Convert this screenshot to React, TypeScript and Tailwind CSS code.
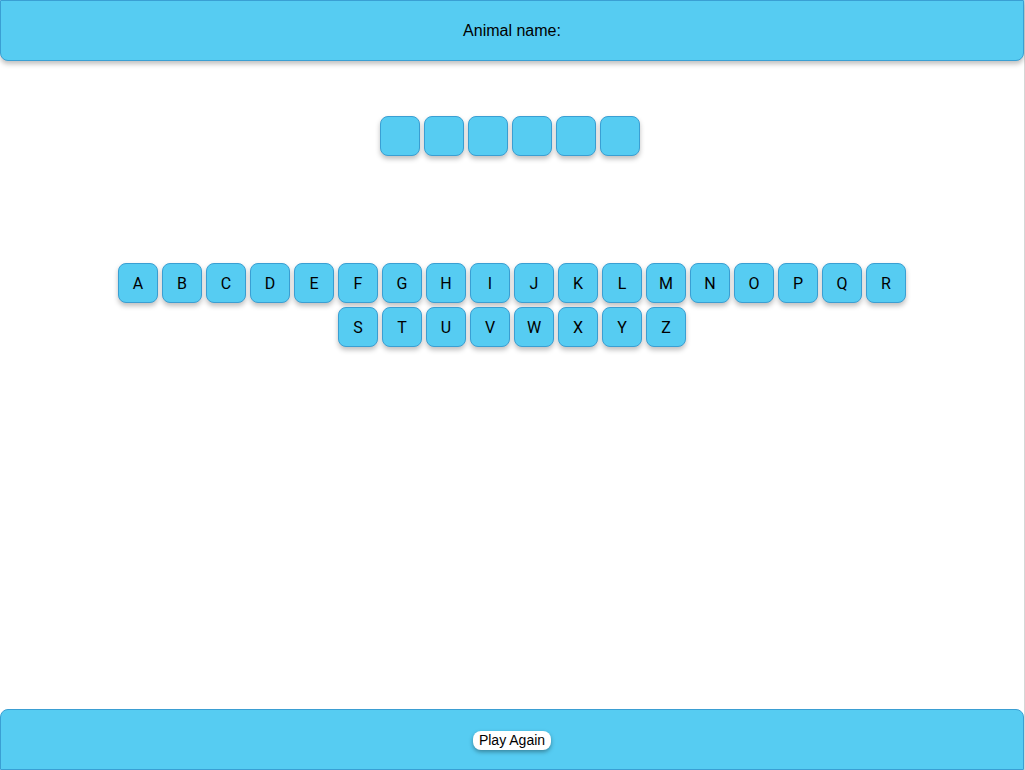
import React from "react";

const letters = "ABCDEFGHIJKLMNOPQRSTUVWXYZ".split("");

export default function App() {
  return (
    <div
      className="flex h-[770px] w-[1025px] flex-col border-r border-[#d6d6d6] bg-white"
      style={{ fontFamily: "Roboto, 'Liberation Sans', sans-serif" }}
    >
      <header className="flex h-[61px] shrink-0 items-center justify-center rounded-b-lg border border-[#3a9fd3] bg-[#56ccf2] shadow-[0_3px_5px_rgba(0,0,0,0.25)]">
        <span className="text-[16px] text-black" style={{ fontFamily: "'Liberation Sans', Arial, sans-serif" }}>
          Animal name:
        </span>
      </header>

      <div className="mt-[55px] flex justify-center gap-[4px] pr-[4px]">
        {Array.from({ length: 6 }).map((_, i) => (
          <div
            key={i}
            className="h-[40px] w-[40px] rounded-lg border border-[#3a9fd3] bg-[#56ccf2] shadow-[0_3px_5px_rgba(0,0,0,0.25)]"
          />
        ))}
      </div>

      <div className="mx-auto mt-[107px] flex w-[792px] flex-wrap justify-center gap-[4px]">
        {letters.map((l) => (
          <button
            key={l}
            className="flex h-[40px] w-[40px] items-center justify-center rounded-lg border border-[#3a9fd3] bg-[#56ccf2] pt-[2px] text-[16px] text-black shadow-[0_3px_5px_rgba(0,0,0,0.25)]"
          >
            {l}
          </button>
        ))}
      </div>

      <footer className="mt-auto flex h-[61px] shrink-0 items-center justify-center rounded-t-lg border border-[#3a9fd3] bg-[#56ccf2]">
        <button
          className="mt-[2px] rounded-[8px] bg-white px-[6px] py-[1px] text-[14px] leading-[17px] text-black shadow-[0_2px_4px_rgba(0,0,0,0.35)]"
          style={{ fontFamily: "'Liberation Sans', Arial, sans-serif" }}
        >
          Play Again
        </button>
      </footer>
    </div>
  );
}
